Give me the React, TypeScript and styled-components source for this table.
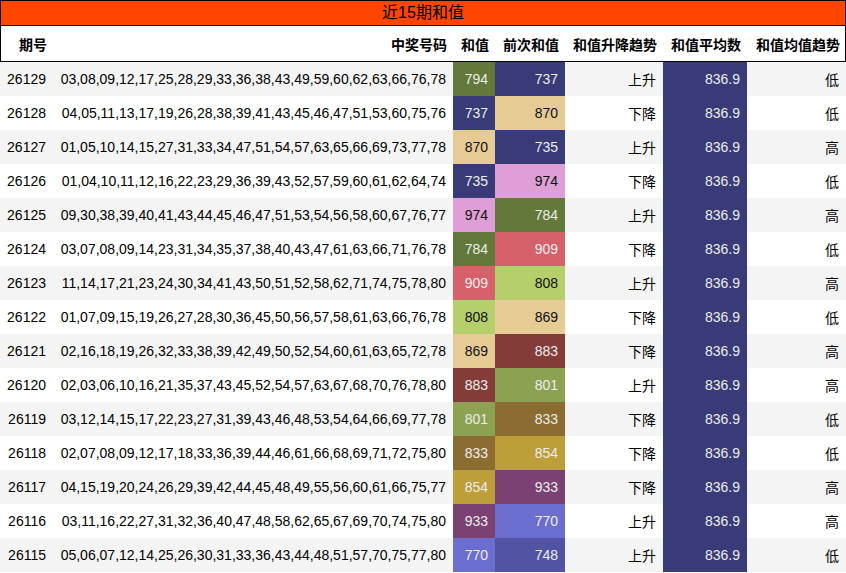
import React from "react";
import styled, { createGlobalStyle } from "styled-components";

const GlobalStyle = createGlobalStyle`
  body {
    margin: 0;
    background: #fff;
    font-family: "Liberation Sans", "Noto Sans CJK SC", sans-serif;
    color: #000;
  }
`;

interface Draw {
  issue: string;
  numbers: string;
  sum: number;
  prev: number;
  trend: string;
  level: string;
}

const draws: Draw[] = [
  { issue: "26129", numbers: "03,08,09,12,17,25,28,29,33,36,38,43,49,59,60,62,63,66,76,78", sum: 794, prev: 737, trend: "上升", level: "低" },
  { issue: "26128", numbers: "04,05,11,13,17,19,26,28,38,39,41,43,45,46,47,51,53,60,75,76", sum: 737, prev: 870, trend: "下降", level: "低" },
  { issue: "26127", numbers: "01,05,10,14,15,27,31,33,34,47,51,54,57,63,65,66,69,73,77,78", sum: 870, prev: 735, trend: "上升", level: "高" },
  { issue: "26126", numbers: "01,04,10,11,12,16,22,23,29,36,39,43,52,57,59,60,61,62,64,74", sum: 735, prev: 974, trend: "下降", level: "低" },
  { issue: "26125", numbers: "09,30,38,39,40,41,43,44,45,46,47,51,53,54,56,58,60,67,76,77", sum: 974, prev: 784, trend: "上升", level: "高" },
  { issue: "26124", numbers: "03,07,08,09,14,23,31,34,35,37,38,40,43,47,61,63,66,71,76,78", sum: 784, prev: 909, trend: "下降", level: "低" },
  { issue: "26123", numbers: "11,14,17,21,23,24,30,34,41,43,50,51,52,58,62,71,74,75,78,80", sum: 909, prev: 808, trend: "上升", level: "高" },
  { issue: "26122", numbers: "01,07,09,15,19,26,27,28,30,36,45,50,56,57,58,61,63,66,76,78", sum: 808, prev: 869, trend: "下降", level: "低" },
  { issue: "26121", numbers: "02,16,18,19,26,32,33,38,39,42,49,50,52,54,60,61,63,65,72,78", sum: 869, prev: 883, trend: "下降", level: "高" },
  { issue: "26120", numbers: "02,03,06,10,16,21,35,37,43,45,52,54,57,63,67,68,70,76,78,80", sum: 883, prev: 801, trend: "上升", level: "高" },
  { issue: "26119", numbers: "03,12,14,15,17,22,23,27,31,39,43,46,48,53,54,64,66,69,77,78", sum: 801, prev: 833, trend: "下降", level: "低" },
  { issue: "26118", numbers: "02,07,08,09,12,17,18,33,36,39,44,46,61,66,68,69,71,72,75,80", sum: 833, prev: 854, trend: "下降", level: "低" },
  { issue: "26117", numbers: "04,15,19,20,24,26,29,39,42,44,45,48,49,55,56,60,61,66,75,77", sum: 854, prev: 933, trend: "下降", level: "高" },
  { issue: "26116", numbers: "03,11,16,22,27,31,32,36,40,47,48,58,62,65,67,69,70,74,75,80", sum: 933, prev: 770, trend: "上升", level: "高" },
  { issue: "26115", numbers: "05,06,07,12,14,25,26,30,31,33,36,43,44,48,51,57,70,75,77,80", sum: 770, prev: 748, trend: "上升", level: "低" },
];

const AVG = "836.9";

// category20b-ish colours per sum value
const sumColors: Record<string, string> = {
  "794": "#637939",
  "737": "#393b79",
  "870": "#e7cb94",
  "735": "#393b79",
  "974": "#de9ed6",
  "784": "#637939",
  "909": "#d6616b",
  "808": "#b5cf6b",
  "869": "#e7cb94",
  "883": "#843c39",
  "801": "#8ca252",
  "833": "#8c6d31",
  "854": "#bd9e39",
  "933": "#7b4173",
  "770": "#6b6ecf",
  "748": "#5254a3",
  "836.9": "#393b79",
};

const lightCells = ["#e7cb94", "#de9ed6", "#b5cf6b"];

const columns = "53px 400px 42px 70px 98px 84px 99px";

const Page = styled.div`
  width: 846px;
`;

const Title = styled.div`
  height: 24px;
  border: 1px solid #000;
  background: #ff4500;
  font-size: 16px;
  line-height: 24px;
  text-align: center;
`;

const HeaderRow = styled.div`
  display: grid;
  grid-template-columns: ${columns};
  height: 35px;
  border-left: 1px solid #000;
  border-right: 1px solid #000;
  border-bottom: 1px solid #000;
  box-sizing: border-box;
  height: 36px;
  background: #fff;
`;

const HeadCell = styled.div`
  display: flex;
  align-items: center;
  justify-content: flex-end;
  padding: 0 7px;
  font-size: 14px;
  font-weight: bold;
  white-space: nowrap;
`;

const Row = styled.div<{ $striped: boolean }>`
  display: grid;
  grid-template-columns: ${columns};
  height: 34px;
  background: ${p => (p.$striped ? "#f4f4f4" : "#fff")};
`;

const Cell = styled.div<{ $bg?: string }>`
  display: flex;
  align-items: center;
  justify-content: flex-end;
  padding: 0 7px;
  font-size: 14px;
  white-space: nowrap;
  background: ${p => p.$bg || "transparent"};
  color: ${p => (!p.$bg ? "#000" : lightCells.includes(p.$bg) ? "#111" : "#ececec")};
`;

export default function App() {
  const heads = ["期号", "中奖号码", "和值", "前次和值", "和值升降趋势", "和值平均数", "和值均值趋势"];
  return (
    <Page>
      <GlobalStyle />
      <Title>近15期和值</Title>
      <HeaderRow>
        {heads.map(h => (
          <HeadCell key={h}>{h}</HeadCell>
        ))}
      </HeaderRow>
      {draws.map((d, i) => (
        <Row key={d.issue} $striped={i % 2 === 0}>
          <Cell>{d.issue}</Cell>
          <Cell>{d.numbers}</Cell>
          <Cell $bg={sumColors[String(d.sum)]}>{d.sum}</Cell>
          <Cell $bg={sumColors[String(d.prev)]}>{d.prev}</Cell>
          <Cell>{d.trend}</Cell>
          <Cell $bg={sumColors[AVG]}>{AVG}</Cell>
          <Cell>{d.level}</Cell>
        </Row>
      ))}
    </Page>
  );
}
